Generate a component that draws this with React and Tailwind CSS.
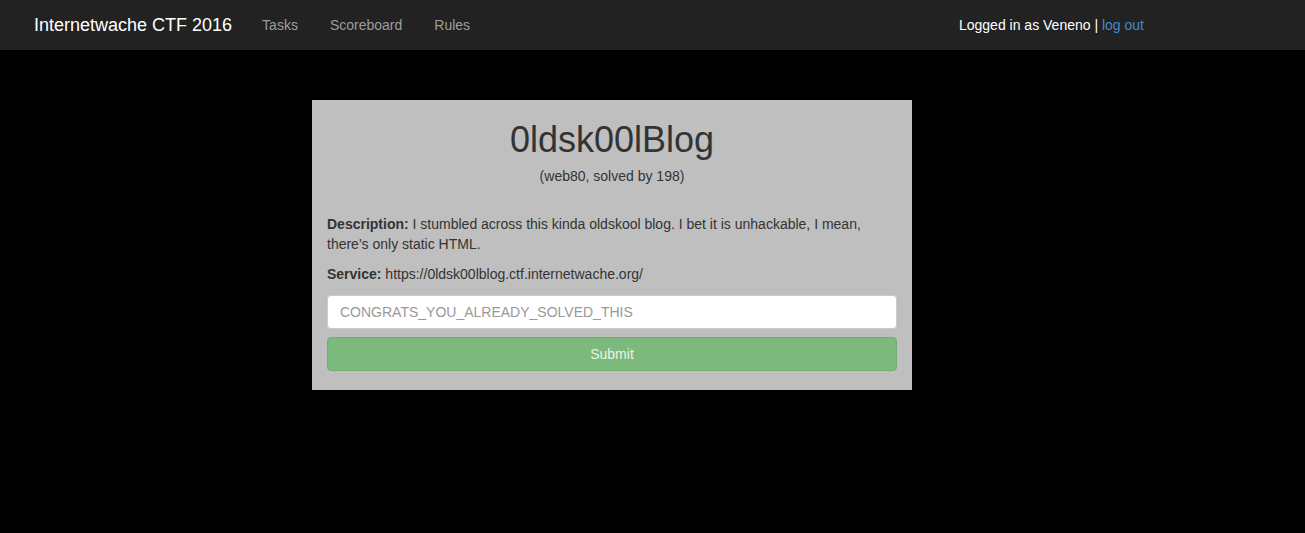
export default function App() {
  return (
    <div className="min-h-screen bg-black text-[14px] leading-[20px] text-[#333]" style={{ fontFamily: '"Liberation Sans", Arial, sans-serif' }}>
      <nav className="flex h-[50px] items-center bg-[#222] pl-[34px] pr-[161px]">
        <a href="#" className="mr-[30px] text-[18px] text-white">Internetwache CTF 2016</a>
        <ul className="flex gap-[32px] text-[#9d9d9d]">
          <li><a href="#">Tasks</a></li>
          <li><a href="#">Scoreboard</a></li>
          <li><a href="#">Rules</a></li>
        </ul>
        <div className="ml-auto text-white">
          Logged in as Veneno | <a href="#" className="text-[#428bca]">log out</a>
        </div>
      </nav>

      <div className="flex justify-center pt-[50px] pr-[81px]">
        <div className="w-[600px] bg-[#bfbfbf] px-[15px] pb-[19px]">
          <h1 className="mt-[20px] text-center text-[36px] leading-[40px] text-[#333]">0ldsk00lBlog</h1>
          <p className="mt-[6px] text-center">(web80, solved by 198)</p>

          <p className="mt-[28px]">
            <b>Description:</b> I stumbled across this kinda oldskool blog. I bet it is unhackable, I mean, there's only static HTML.
          </p>
          <p className="mt-[10px]">
            <b>Service:</b> https://0ldsk00lblog.ctf.internetwache.org/
          </p>

          <input
            className="mt-[11px] block h-[34px] w-full rounded-[4px] border border-[#ccc] bg-white px-[12px] text-[14px] placeholder:text-[#999]"
            placeholder="CONGRATS_YOU_ALREADY_SOLVED_THIS"
            disabled
          />
          <button className="mt-[8px] block h-[34px] w-full rounded-[4px] border border-[#6fae6f] bg-[#7cb97c] text-[14px] text-[#e8f3e8]">
            Submit
          </button>
        </div>
      </div>
    </div>
  );
}
